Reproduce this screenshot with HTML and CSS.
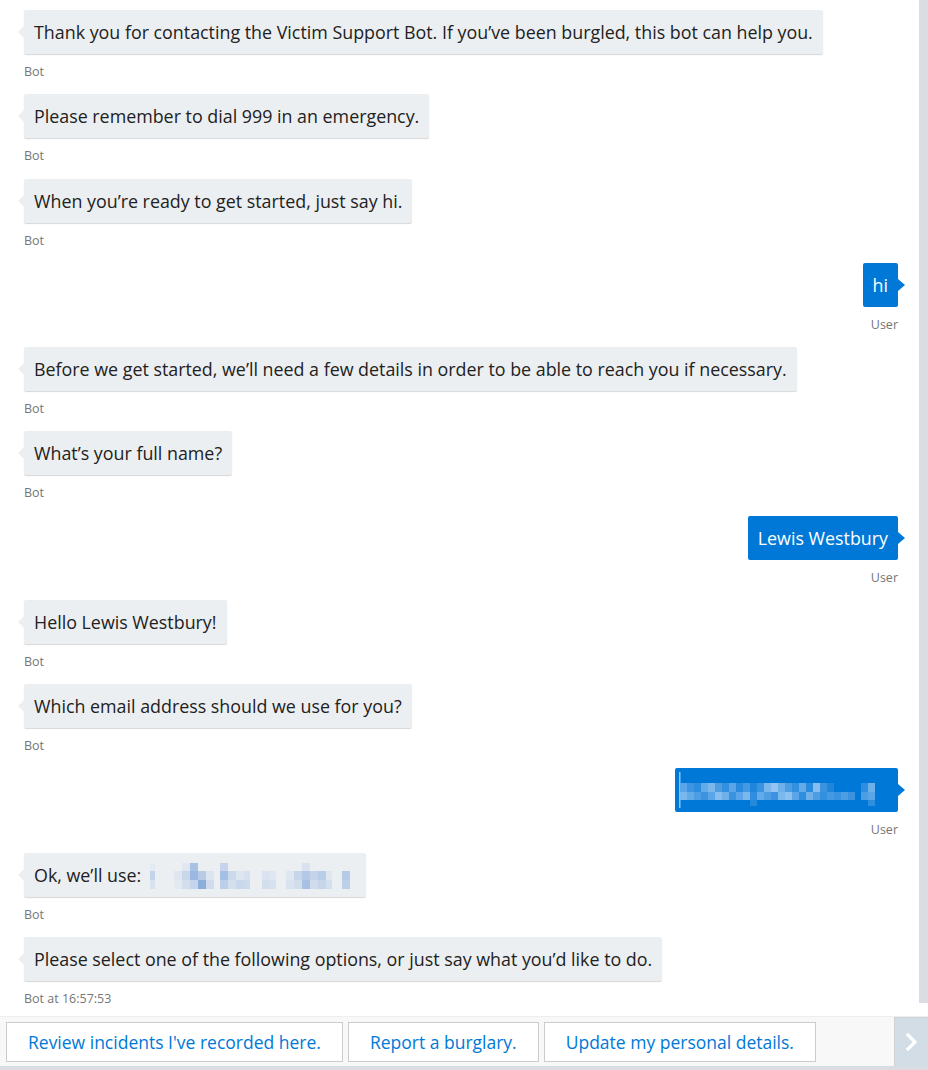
FILE: index.html
```html
<!DOCTYPE html>
<html lang="en">
<head>
<meta charset="utf-8">
<title>Victim Support Bot</title>
<link rel="stylesheet" href="styles.css">
</head>
<body>
<div class="app">
  <div class="main">
    <div class="transcript">
      <div class="msg bot"><div class="bubble">Thank you for contacting the Victim Support Bot. If you’ve been burgled, this bot can help you.</div><div class="meta">Bot</div></div>
      <div class="msg bot"><div class="bubble">Please remember to dial 999 in an emergency.</div><div class="meta">Bot</div></div>
      <div class="msg bot"><div class="bubble">When you’re ready to get started, just say hi.</div><div class="meta">Bot</div></div>
      <div class="msg user"><div class="bubble">hi</div><div class="meta">User</div></div>
      <div class="msg bot"><div class="bubble">Before we get started, we’ll need a few details in order to be able to reach you if necessary.</div><div class="meta">Bot</div></div>
      <div class="msg bot"><div class="bubble">What’s your full name?</div><div class="meta">Bot</div></div>
      <div class="msg user"><div class="bubble">Lewis Westbury</div><div class="meta">User</div></div>
      <div class="msg bot"><div class="bubble">Hello Lewis Westbury!</div><div class="meta">Bot</div></div>
      <div class="msg bot"><div class="bubble">Which email address should we use for you?</div><div class="meta">Bot</div></div>
      <div class="msg user"><div class="bubble redacted"><svg class="pix-user" width="204" height="36" viewBox="0 0 204 36">
        <rect x="1" y="0" width="1.5" height="36" fill="#8fc3ef"/>
        <rect x="2" y="11" width="7" height="9" fill="#5aa5e7"/><rect x="2" y="20" width="7" height="8" fill="#7ab7ec"/>
        <rect x="9" y="11" width="7" height="9" fill="#3d95e1"/><rect x="9" y="20" width="7" height="8" fill="#62aae8"/>
        <rect x="16" y="11" width="7" height="9" fill="#2c8cde"/><rect x="16" y="20" width="7" height="8" fill="#4d9de3"/>
        <rect x="23" y="11" width="7" height="9" fill="#62aae8"/><rect x="23" y="20" width="7" height="8" fill="#3b93e0"/>
        <rect x="30" y="11" width="7" height="9" fill="#7ab7ec"/><rect x="30" y="20" width="7" height="8" fill="#5aa5e7"/>
        <rect x="37" y="11" width="7" height="9" fill="#4d9de3"/><rect x="37" y="20" width="7" height="8" fill="#86bdee"/>
        <rect x="44" y="11" width="7" height="9" fill="#3390df"/><rect x="44" y="20" width="7" height="8" fill="#6eb0ea"/>
        <rect x="51" y="11" width="7" height="9" fill="#5aa5e7"/><rect x="51" y="20" width="7" height="8" fill="#3b93e0"/>
        <rect x="58" y="11" width="7" height="9" fill="#2a8bde"/><rect x="58" y="20" width="7" height="8" fill="#5aa5e7"/>
        <rect x="65" y="11" width="7" height="9" fill="#4499e2"/><rect x="65" y="20" width="7" height="8" fill="#7ab7ec"/>
        <rect x="72" y="11" width="7" height="9" fill="#1f86dc"/><rect x="72" y="20" width="7" height="8" fill="#2f8edf"/><rect x="72" y="28" width="7" height="6" fill="#2589dd"/>
        <rect x="79" y="11" width="7" height="9" fill="#3a93e0"/><rect x="79" y="20" width="7" height="8" fill="#62aae8"/>
        <rect x="86" y="11" width="7" height="9" fill="#7ab7ec"/><rect x="86" y="20" width="7" height="8" fill="#4d9de3"/>
        <rect x="93" y="11" width="7" height="9" fill="#94c4ef"/><rect x="93" y="20" width="7" height="8" fill="#3b93e0"/>
        <rect x="100" y="11" width="7" height="9" fill="#6eb0ea"/><rect x="100" y="20" width="7" height="8" fill="#7ab7ec"/>
        <rect x="107" y="11" width="7" height="9" fill="#4d9de3"/><rect x="107" y="20" width="7" height="8" fill="#8cc0ee"/>
        <rect x="114" y="11" width="7" height="9" fill="#3390df"/><rect x="114" y="20" width="7" height="8" fill="#5aa5e7"/>
        <rect x="121" y="11" width="7" height="9" fill="#62aae8"/><rect x="121" y="20" width="7" height="8" fill="#2f8edf"/>
        <rect x="128" y="11" width="7" height="9" fill="#2a8bde"/><rect x="128" y="20" width="7" height="8" fill="#6eb0ea"/>
        <rect x="135" y="11" width="7" height="9" fill="#86bdee"/><rect x="135" y="20" width="7" height="8" fill="#4d9de3"/>
        <rect x="142" y="11" width="7" height="9" fill="#3b93e0"/><rect x="142" y="20" width="7" height="8" fill="#3390df"/>
        <rect x="149" y="11" width="7" height="9" fill="#1f86dc"/><rect x="149" y="20" width="7" height="8" fill="#4499e2"/>
        <rect x="156" y="20" width="7" height="8" fill="#3a93e0"/>
        <rect x="163" y="20" width="7" height="8" fill="#4d9de3"/>
        <rect x="170" y="20" width="7" height="8" fill="#3b93e0"/>
        <rect x="183" y="11" width="7" height="9" fill="#2f8edf"/><rect x="183" y="20" width="7" height="8" fill="#4d9de3"/>
        <rect x="190" y="11" width="7" height="9" fill="#6eb0ea"/><rect x="190" y="20" width="7" height="8" fill="#5aa5e7"/><rect x="190" y="28" width="7" height="6" fill="#2f8edf"/>
      </svg></div><div class="meta">User</div></div>
      <div class="msg bot"><div class="bubble">Ok, we’ll use: <svg class="pix-bot" width="210" height="26" viewBox="0 0 210 26">
        <rect x="4" y="0" width="5" height="8" fill="#e4eaf2"/><rect x="4" y="8" width="5" height="9" fill="#c3d3e9"/><rect x="4" y="17" width="5" height="9" fill="#d8e1ee"/>
        <rect x="28" y="8" width="8" height="9" fill="#dfe6f0"/><rect x="28" y="17" width="8" height="9" fill="#e3e9f1"/>
        <rect x="36" y="0" width="8" height="8" fill="#e0e7f0"/><rect x="36" y="8" width="8" height="9" fill="#c8d7ea"/><rect x="36" y="17" width="8" height="9" fill="#d3deed"/>
        <rect x="44" y="0" width="8" height="8" fill="#a9c1e3"/><rect x="44" y="8" width="8" height="9" fill="#9ab8e0"/><rect x="44" y="17" width="8" height="9" fill="#c5d4ea"/>
        <rect x="52" y="8" width="8" height="9" fill="#b7cbe7"/><rect x="52" y="17" width="8" height="9" fill="#8caedb"/>
        <rect x="60" y="8" width="8" height="9" fill="#dce4ef"/><rect x="60" y="17" width="8" height="9" fill="#d0dcec"/>
        <rect x="74" y="0" width="8" height="8" fill="#c5d4ea"/><rect x="74" y="8" width="8" height="9" fill="#a3bfe3"/><rect x="74" y="17" width="8" height="9" fill="#bccfe8"/>
        <rect x="82" y="8" width="8" height="9" fill="#cbd9eb"/><rect x="82" y="17" width="8" height="9" fill="#d4dfee"/>
        <rect x="90" y="8" width="8" height="9" fill="#dde5f0"/><rect x="90" y="17" width="8" height="9" fill="#c9d7ea"/>
        <rect x="98" y="8" width="6" height="9" fill="#d6e0ee"/><rect x="98" y="17" width="6" height="9" fill="#cddaeb"/>
        <rect x="116" y="8" width="8" height="9" fill="#dae3ef"/><rect x="116" y="17" width="8" height="9" fill="#d3deed"/>
        <rect x="124" y="8" width="6" height="9" fill="#e0e7f0"/><rect x="124" y="17" width="6" height="9" fill="#d7e0ee"/>
        <rect x="140" y="8" width="8" height="9" fill="#dfe6f0"/><rect x="140" y="17" width="8" height="9" fill="#d9e2ef"/>
        <rect x="148" y="8" width="8" height="9" fill="#c7d5ea"/><rect x="148" y="17" width="8" height="9" fill="#d2ddec"/>
        <rect x="156" y="0" width="8" height="8" fill="#d9e3ef"/><rect x="156" y="8" width="8" height="9" fill="#b3c9e6"/><rect x="156" y="17" width="8" height="9" fill="#a7c0e3"/>
        <rect x="164" y="8" width="8" height="9" fill="#c4d3ea"/><rect x="164" y="17" width="8" height="9" fill="#d0dcec"/>
        <rect x="172" y="8" width="8" height="9" fill="#b9cde8"/><rect x="172" y="17" width="8" height="9" fill="#c6d5ea"/>
        <rect x="180" y="8" width="6" height="9" fill="#dfe6f0"/><rect x="180" y="17" width="6" height="9" fill="#d4dfee"/>
        <rect x="196" y="8" width="8" height="9" fill="#b5cae7"/><rect x="196" y="17" width="8" height="9" fill="#bdd0e8"/>
      </svg></div><div class="meta">Bot</div></div>
      <div class="msg bot"><div class="bubble">Please select one of the following options, or just say what you’d like to do.</div><div class="meta">Bot at 16:57:53</div></div>
    </div>
    <div class="vscroll"></div>
  </div>
  <div class="actions">
    <div class="buttons">
      <button class="action">Review incidents I've recorded here.</button>
      <button class="action">Report a burglary.</button>
      <button class="action">Update my personal details.</button>
    </div>
    <button class="next" aria-label="Next"><svg width="14" height="20" viewBox="0 0 14 20"><path d="M3 3 L10 10 L3 17" fill="none" stroke="#ffffff" stroke-width="3.2" stroke-linecap="square"/></svg></button>
  </div>
  <div class="hscroll"></div>
</div>
</body>
</html>
```

FILE: styles.css
```css
* { box-sizing: border-box; }
html, body { margin: 0; padding: 0; background: #ffffff; }
body {
  font-family: "Open Sans", Lato, sans-serif;
  color: #212121;
  width: 928px;
  height: 1070px;
  overflow: hidden;
}
.app {
  display: flex;
  flex-direction: column;
  height: 1070px;
}
.main {
  display: flex;
  height: 1016px;
}
.transcript {
  flex: 1;
  display: flex;
  flex-direction: column;
  padding: 10px 21px 0 24px;
}
.vscroll {
  width: 9px;
  height: 1003px;
  background: #dadde1;
}
.msg {
  display: flex;
  flex-direction: column;
  margin-bottom: 13.27px;
}
.msg.bot { align-items: flex-start; }
.msg.user { align-items: flex-end; }
.bubble {
  position: relative;
  font-size: 17.85px;
  line-height: 28px;
  padding: 8px 10px;
  border-radius: 2px;
  white-space: nowrap;
}
.bot .bubble {
  background: #eceff1;
  box-shadow: 0 1px 1px rgba(0, 0, 0, 0.16);
}
.bot .bubble::before {
  content: "";
  position: absolute;
  left: -6px;
  top: 50%;
  margin-top: -6px;
  border-top: 6px solid transparent;
  border-bottom: 6px solid transparent;
  border-right: 6px solid #eceff1;
}
.user .bubble {
  background: #0078d7;
  color: #ffffff;
}
.user .bubble::after {
  content: "";
  position: absolute;
  right: -7px;
  top: 50%;
  margin-top: -6px;
  border-top: 6px solid transparent;
  border-bottom: 6px solid transparent;
  border-left: 7px solid #0078d7;
}
.bubble.redacted {
  padding: 4px 16px 4px 3px;
  line-height: 0;
}
.pix-user { display: block; }
.pix-bot {
  display: inline-block;
  vertical-align: top;
  margin-top: 2px;
}
.meta {
  font-size: 12.5px;
  line-height: 18px;
  margin-top: 9px;
  color: #767676;
}
.actions {
  height: 50px;
  background: #f8f8f8;
  border-top: 1px solid #eeeeee;
  display: flex;
  justify-content: space-between;
}
.buttons {
  display: flex;
  gap: 5px;
  padding: 5px 0 0 6px;
  align-items: flex-start;
}
.action {
  height: 40px;
  padding: 0 21px;
  background: #ffffff;
  border: 1px solid #cccccc;
  color: #0078d7;
  font-family: "Open Sans", Lato, sans-serif;
  font-size: 17.5px;
  cursor: pointer;
}
.next {
  width: 34px;
  height: 49px;
  padding: 0;
  border: 1px solid #cfd3d6;
  border-right: 0;
  border-bottom: 0;
  background: #d2dde6;
  display: flex;
  align-items: center;
  justify-content: center;
}
.hscroll {
  height: 4px;
  background: #dadde1;
}
```
